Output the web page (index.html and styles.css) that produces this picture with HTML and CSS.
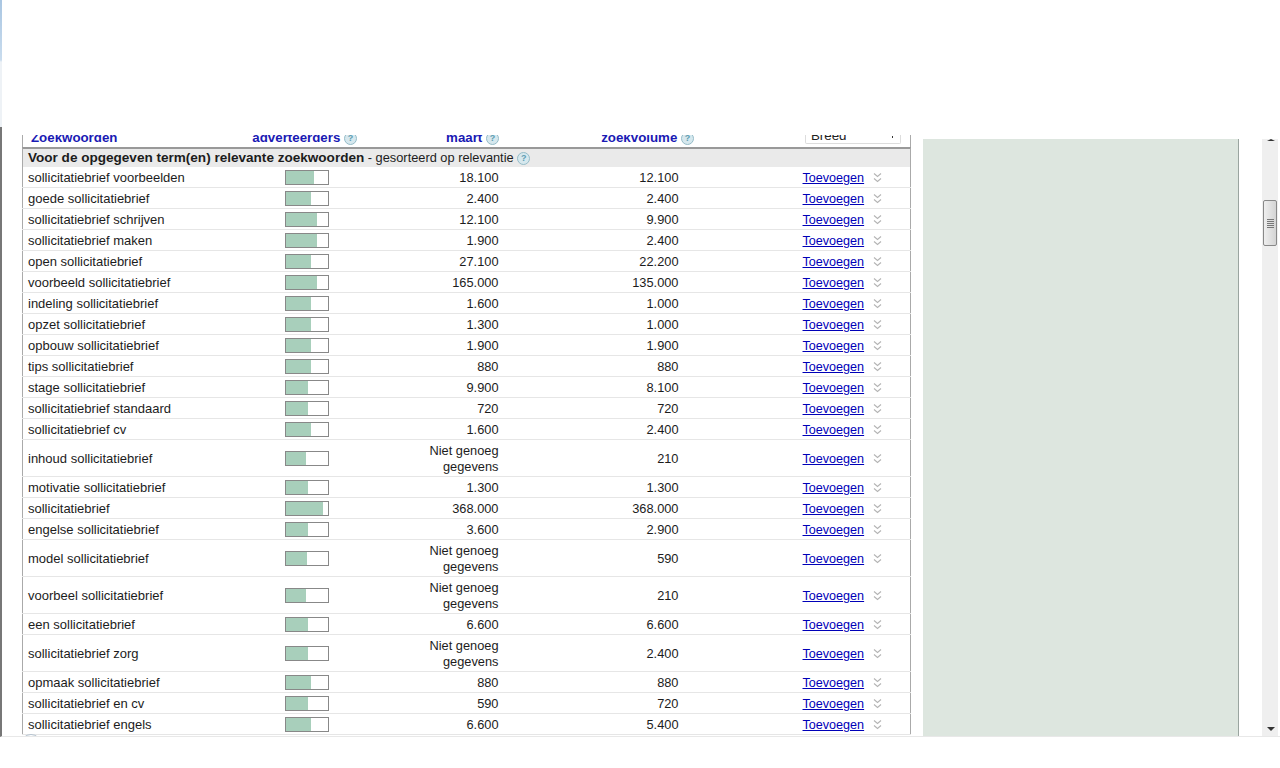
FILE: index.html
```html
<!DOCTYPE html>
<html lang="nl">
<head>
  <meta charset="UTF-8">
  <title>Zoekwoorden</title>
  <link rel="stylesheet" href="styles.css">
</head>
<body>
  <svg class="svg-defs" width="0" height="0">
    <symbol id="chevrons" viewBox="0 0 9 10">
      <path d="M1 .5l3.500 3 3.500-3M1 5.500l3.500 3 3.500-3" fill="none" stroke="#b4b4b4" stroke-width="1.100"/>
    </symbol>
  </svg>

  <div class="top-band"></div>

  <div class="content">
    <div class="results">
      <div class="col-heads">
        <span class="head head-keyword">Zoekwoorden</span>
        <span class="head head-adv">adverteerders <i class="help">?</i></span>
        <span class="head head-month">maart <i class="help">?</i></span>
        <span class="head head-volume">zoekvolume <i class="help">?</i></span>
        <span class="match-select">Breed</span>
      </div>

      <div class="group-title"><b>Voor de opgegeven term(en) relevante zoekwoorden</b> - gesorteerd op relevantie <i class="help">?</i></div>

      <table class="keywords">
        <colgroup>
          <col class="c-keyword"><col class="c-bar"><col class="c-month"><col class="c-volume"><col class="c-add">
        </colgroup>
        <tbody>
          <tr><td>sollicitatiebrief voorbeelden</td><td><div class="bar"><div class="fill" style="width:28px"></div></div></td><td class="num">18.100</td><td class="num">12.100</td><td class="add"><a href="#">Toevoegen</a><svg class="chev"><use href="#chevrons"/></svg></td></tr>
          <tr><td>goede sollicitatiebrief</td><td><div class="bar"><div class="fill" style="width:25px"></div></div></td><td class="num">2.400</td><td class="num">2.400</td><td class="add"><a href="#">Toevoegen</a><svg class="chev"><use href="#chevrons"/></svg></td></tr>
          <tr><td>sollicitatiebrief schrijven</td><td><div class="bar"><div class="fill" style="width:31px"></div></div></td><td class="num">12.100</td><td class="num">9.900</td><td class="add"><a href="#">Toevoegen</a><svg class="chev"><use href="#chevrons"/></svg></td></tr>
          <tr><td>sollicitatiebrief maken</td><td><div class="bar"><div class="fill" style="width:31px"></div></div></td><td class="num">1.900</td><td class="num">2.400</td><td class="add"><a href="#">Toevoegen</a><svg class="chev"><use href="#chevrons"/></svg></td></tr>
          <tr><td>open sollicitatiebrief</td><td><div class="bar"><div class="fill" style="width:25px"></div></div></td><td class="num">27.100</td><td class="num">22.200</td><td class="add"><a href="#">Toevoegen</a><svg class="chev"><use href="#chevrons"/></svg></td></tr>
          <tr><td>voorbeeld sollicitatiebrief</td><td><div class="bar"><div class="fill" style="width:31px"></div></div></td><td class="num">165.000</td><td class="num">135.000</td><td class="add"><a href="#">Toevoegen</a><svg class="chev"><use href="#chevrons"/></svg></td></tr>
          <tr><td>indeling sollicitatiebrief</td><td><div class="bar"><div class="fill" style="width:25px"></div></div></td><td class="num">1.600</td><td class="num">1.000</td><td class="add"><a href="#">Toevoegen</a><svg class="chev"><use href="#chevrons"/></svg></td></tr>
          <tr><td>opzet sollicitatiebrief</td><td><div class="bar"><div class="fill" style="width:25px"></div></div></td><td class="num">1.300</td><td class="num">1.000</td><td class="add"><a href="#">Toevoegen</a><svg class="chev"><use href="#chevrons"/></svg></td></tr>
          <tr><td>opbouw sollicitatiebrief</td><td><div class="bar"><div class="fill" style="width:25px"></div></div></td><td class="num">1.900</td><td class="num">1.900</td><td class="add"><a href="#">Toevoegen</a><svg class="chev"><use href="#chevrons"/></svg></td></tr>
          <tr><td>tips sollicitatiebrief</td><td><div class="bar"><div class="fill" style="width:25px"></div></div></td><td class="num">880</td><td class="num">880</td><td class="add"><a href="#">Toevoegen</a><svg class="chev"><use href="#chevrons"/></svg></td></tr>
          <tr><td>stage sollicitatiebrief</td><td><div class="bar"><div class="fill" style="width:22px"></div></div></td><td class="num">9.900</td><td class="num">8.100</td><td class="add"><a href="#">Toevoegen</a><svg class="chev"><use href="#chevrons"/></svg></td></tr>
          <tr><td>sollicitatiebrief standaard</td><td><div class="bar"><div class="fill" style="width:22px"></div></div></td><td class="num">720</td><td class="num">720</td><td class="add"><a href="#">Toevoegen</a><svg class="chev"><use href="#chevrons"/></svg></td></tr>
          <tr><td>sollicitatiebrief cv</td><td><div class="bar"><div class="fill" style="width:25px"></div></div></td><td class="num">1.600</td><td class="num">2.400</td><td class="add"><a href="#">Toevoegen</a><svg class="chev"><use href="#chevrons"/></svg></td></tr>
          <tr><td>inhoud sollicitatiebrief</td><td><div class="bar"><div class="fill" style="width:20px"></div></div></td><td class="num">Niet genoeg gegevens</td><td class="num">210</td><td class="add"><a href="#">Toevoegen</a><svg class="chev"><use href="#chevrons"/></svg></td></tr>
          <tr><td>motivatie sollicitatiebrief</td><td><div class="bar"><div class="fill" style="width:22px"></div></div></td><td class="num">1.300</td><td class="num">1.300</td><td class="add"><a href="#">Toevoegen</a><svg class="chev"><use href="#chevrons"/></svg></td></tr>
          <tr><td>sollicitatiebrief</td><td><div class="bar"><div class="fill" style="width:37px"></div></div></td><td class="num">368.000</td><td class="num">368.000</td><td class="add"><a href="#">Toevoegen</a><svg class="chev"><use href="#chevrons"/></svg></td></tr>
          <tr><td>engelse sollicitatiebrief</td><td><div class="bar"><div class="fill" style="width:22px"></div></div></td><td class="num">3.600</td><td class="num">2.900</td><td class="add"><a href="#">Toevoegen</a><svg class="chev"><use href="#chevrons"/></svg></td></tr>
          <tr><td>model sollicitatiebrief</td><td><div class="bar"><div class="fill" style="width:21px"></div></div></td><td class="num">Niet genoeg gegevens</td><td class="num">590</td><td class="add"><a href="#">Toevoegen</a><svg class="chev"><use href="#chevrons"/></svg></td></tr>
          <tr><td>voorbeel sollicitatiebrief</td><td><div class="bar"><div class="fill" style="width:20px"></div></div></td><td class="num">Niet genoeg gegevens</td><td class="num">210</td><td class="add"><a href="#">Toevoegen</a><svg class="chev"><use href="#chevrons"/></svg></td></tr>
          <tr><td>een sollicitatiebrief</td><td><div class="bar"><div class="fill" style="width:22px"></div></div></td><td class="num">6.600</td><td class="num">6.600</td><td class="add"><a href="#">Toevoegen</a><svg class="chev"><use href="#chevrons"/></svg></td></tr>
          <tr><td>sollicitatiebrief zorg</td><td><div class="bar"><div class="fill" style="width:22px"></div></div></td><td class="num">Niet genoeg gegevens</td><td class="num">2.400</td><td class="add"><a href="#">Toevoegen</a><svg class="chev"><use href="#chevrons"/></svg></td></tr>
          <tr><td>opmaak sollicitatiebrief</td><td><div class="bar"><div class="fill" style="width:25px"></div></div></td><td class="num">880</td><td class="num">880</td><td class="add"><a href="#">Toevoegen</a><svg class="chev"><use href="#chevrons"/></svg></td></tr>
          <tr><td>sollicitatiebrief en cv</td><td><div class="bar"><div class="fill" style="width:22px"></div></div></td><td class="num">590</td><td class="num">720</td><td class="add"><a href="#">Toevoegen</a><svg class="chev"><use href="#chevrons"/></svg></td></tr>
          <tr><td>sollicitatiebrief engels</td><td><div class="bar"><div class="fill" style="width:25px"></div></div></td><td class="num">6.600</td><td class="num">5.400</td><td class="add"><a href="#">Toevoegen</a><svg class="chev"><use href="#chevrons"/></svg></td></tr>
        </tbody>
      </table>
      <div class="more-btn"></div>
    </div>

    <aside class="side-panel"></aside>

    <div class="scrollbar">
      <span class="arrow-up"></span>
      <div class="thumb"><span class="grip"></span></div>
      <span class="arrow-down"></span>
    </div>
  </div>
</body>
</html>
```

FILE: styles.css
```css
html, body {
  margin: 0;
  height: 768px;
  overflow: hidden;
  background: #fff;
}

body {
  font-family: "Liberation Sans", Arial, sans-serif;
  font-size: 12.8px;
  color: #1c1c1c;
}

.svg-defs {
  display: block;
  height: 0;
}

.top-band {
  height: 127px;
  background: linear-gradient(#a9c6e2 0, #c9dcee 60px, #eef2f6 62px);
  background-size: 2px 100%;
  background-repeat: no-repeat;
}

.content {
  height: 609px;
  display: flex;
  border-left: 2px solid #777;
  border-bottom: 1px solid #e8e8e8;
  overflow: hidden;
}

.results {
  width: 889px;
  margin: 8px 0 0 20px;
  flex: none;
}

/* kolomkoppen, bovenkant valt buiten beeld */
.col-heads {
  height: 12px;
  display: flex;
  overflow: hidden;
  border-left: 1px solid #aaa;
  border-right: 1px solid #aaa;
  line-height: 15px;
}

.head {
  color: #1a1ab4;
  font-weight: bold;
  font-size: 13.300px;
  text-align: right;
  white-space: nowrap;
  margin-top: -5px;
}

.head-keyword {
  width: 200px;
  padding-left: 8px;
  box-sizing: border-box;
  text-align: left;
}

.head-adv { width: 134px; }
.head-month { width: 142px; }
.head-volume { width: 195px; }

.match-select {
  position: relative;
  margin-left: 111px;
  width: 96px;
  height: 9px;
  box-sizing: border-box;
  padding-left: 5px;
  border: 1px solid #ddd;
  border-top: none;
  border-radius: 0 0 2px 2px;
  color: #222;
  font-size: 13.300px;
  line-height: 2px;
}

.match-select::after {
  content: "";
  position: absolute;
  top: 1px;
  right: 7px;
  width: 1px;
  height: 2px;
  background: #333;
}

.help {
  display: inline-block;
  width: 11px;
  height: 11px;
  line-height: 11px;
  border: 1px solid #95bcc8;
  border-radius: 50%;
  background: #d6e8ee;
  color: #5f9db2;
  font-size: 9px;
  font-style: normal;
  font-weight: bold;
  text-align: center;
  vertical-align: 1px;
}

.group-title {
  height: 18px;
  line-height: 18px;
  padding-left: 5px;
  background: #eaeaea;
  border-top: 2px solid #999;
  border-left: 1px solid #aaa;
  border-right: 1px solid #aaa;
  white-space: nowrap;
}

.group-title b {
  font-size: 13.550px;
}

.keywords {
  width: 889px;
  table-layout: fixed;
  border-collapse: collapse;
  border-left: 1px solid #aaa;
  border-right: 1px solid #aaa;
}

.c-keyword { width: 257px; }
.c-bar { width: 144px; }
.c-month { width: 79px; }
.c-volume { width: 180px; }

.keywords td {
  padding: 3px 5px 1px;
  border-bottom: 1px solid #e6e6e6;
  line-height: 16px;
}

.keywords td:first-child {
  font-size: 13px;
}

.keywords .num {
  padding-right: 4px;
  text-align: right;
}

.keywords .add {
  padding-left: 120px;
  white-space: nowrap;
}

.add a {
  color: #0000b8;
  font-size: 12.600px;
}

.chev {
  width: 9px;
  height: 10px;
  margin-left: 9px;
  vertical-align: -1px;
}

.bar {
  width: 42px;
  height: 13px;
  margin-top: -1px;
  border: 1px solid #888;
  background: #fff;
}

.fill {
  height: 100%;
  background: #a8cfbb;
}

/* ronde knop onder de tabel, alleen de bovenrand is nog zichtbaar */
.more-btn {
  width: 20px;
  height: 20px;
  margin: -1px 0 0 -2px;
  border: 1px solid #b5c3d0;
  border-radius: 50%;
  position: relative;
}

.side-panel {
  width: 315px;
  margin: 12px 0 0 12px;
  background: #dde6df;
  border-right: 1px solid #9aa5a0;
  flex: none;
}

.scrollbar {
  width: 16px;
  margin: 12px 0 0 23px;
  background: #efefef;
  position: relative;
  flex: none;
}

.thumb {
  position: absolute;
  top: 61px;
  left: 1px;
  width: 12px;
  height: 44px;
  border: 1px solid #888;
  border-radius: 2px;
  background: linear-gradient(90deg, #eee, #d4d4d4);
  display: flex;
  align-items: center;
  justify-content: center;
}

.grip {
  width: 7px;
  height: 9px;
  background: repeating-linear-gradient(#777 0 1px, transparent 1px 2px);
}

.arrow-up,
.arrow-down {
  position: absolute;
  left: 5px;
  border-left: 4px solid transparent;
  border-right: 4px solid transparent;
}

.arrow-up {
  top: 0;
  border-bottom: 2px solid #333;
}

.arrow-down {
  bottom: 5px;
  border-top: 4px solid #333;
}
```
